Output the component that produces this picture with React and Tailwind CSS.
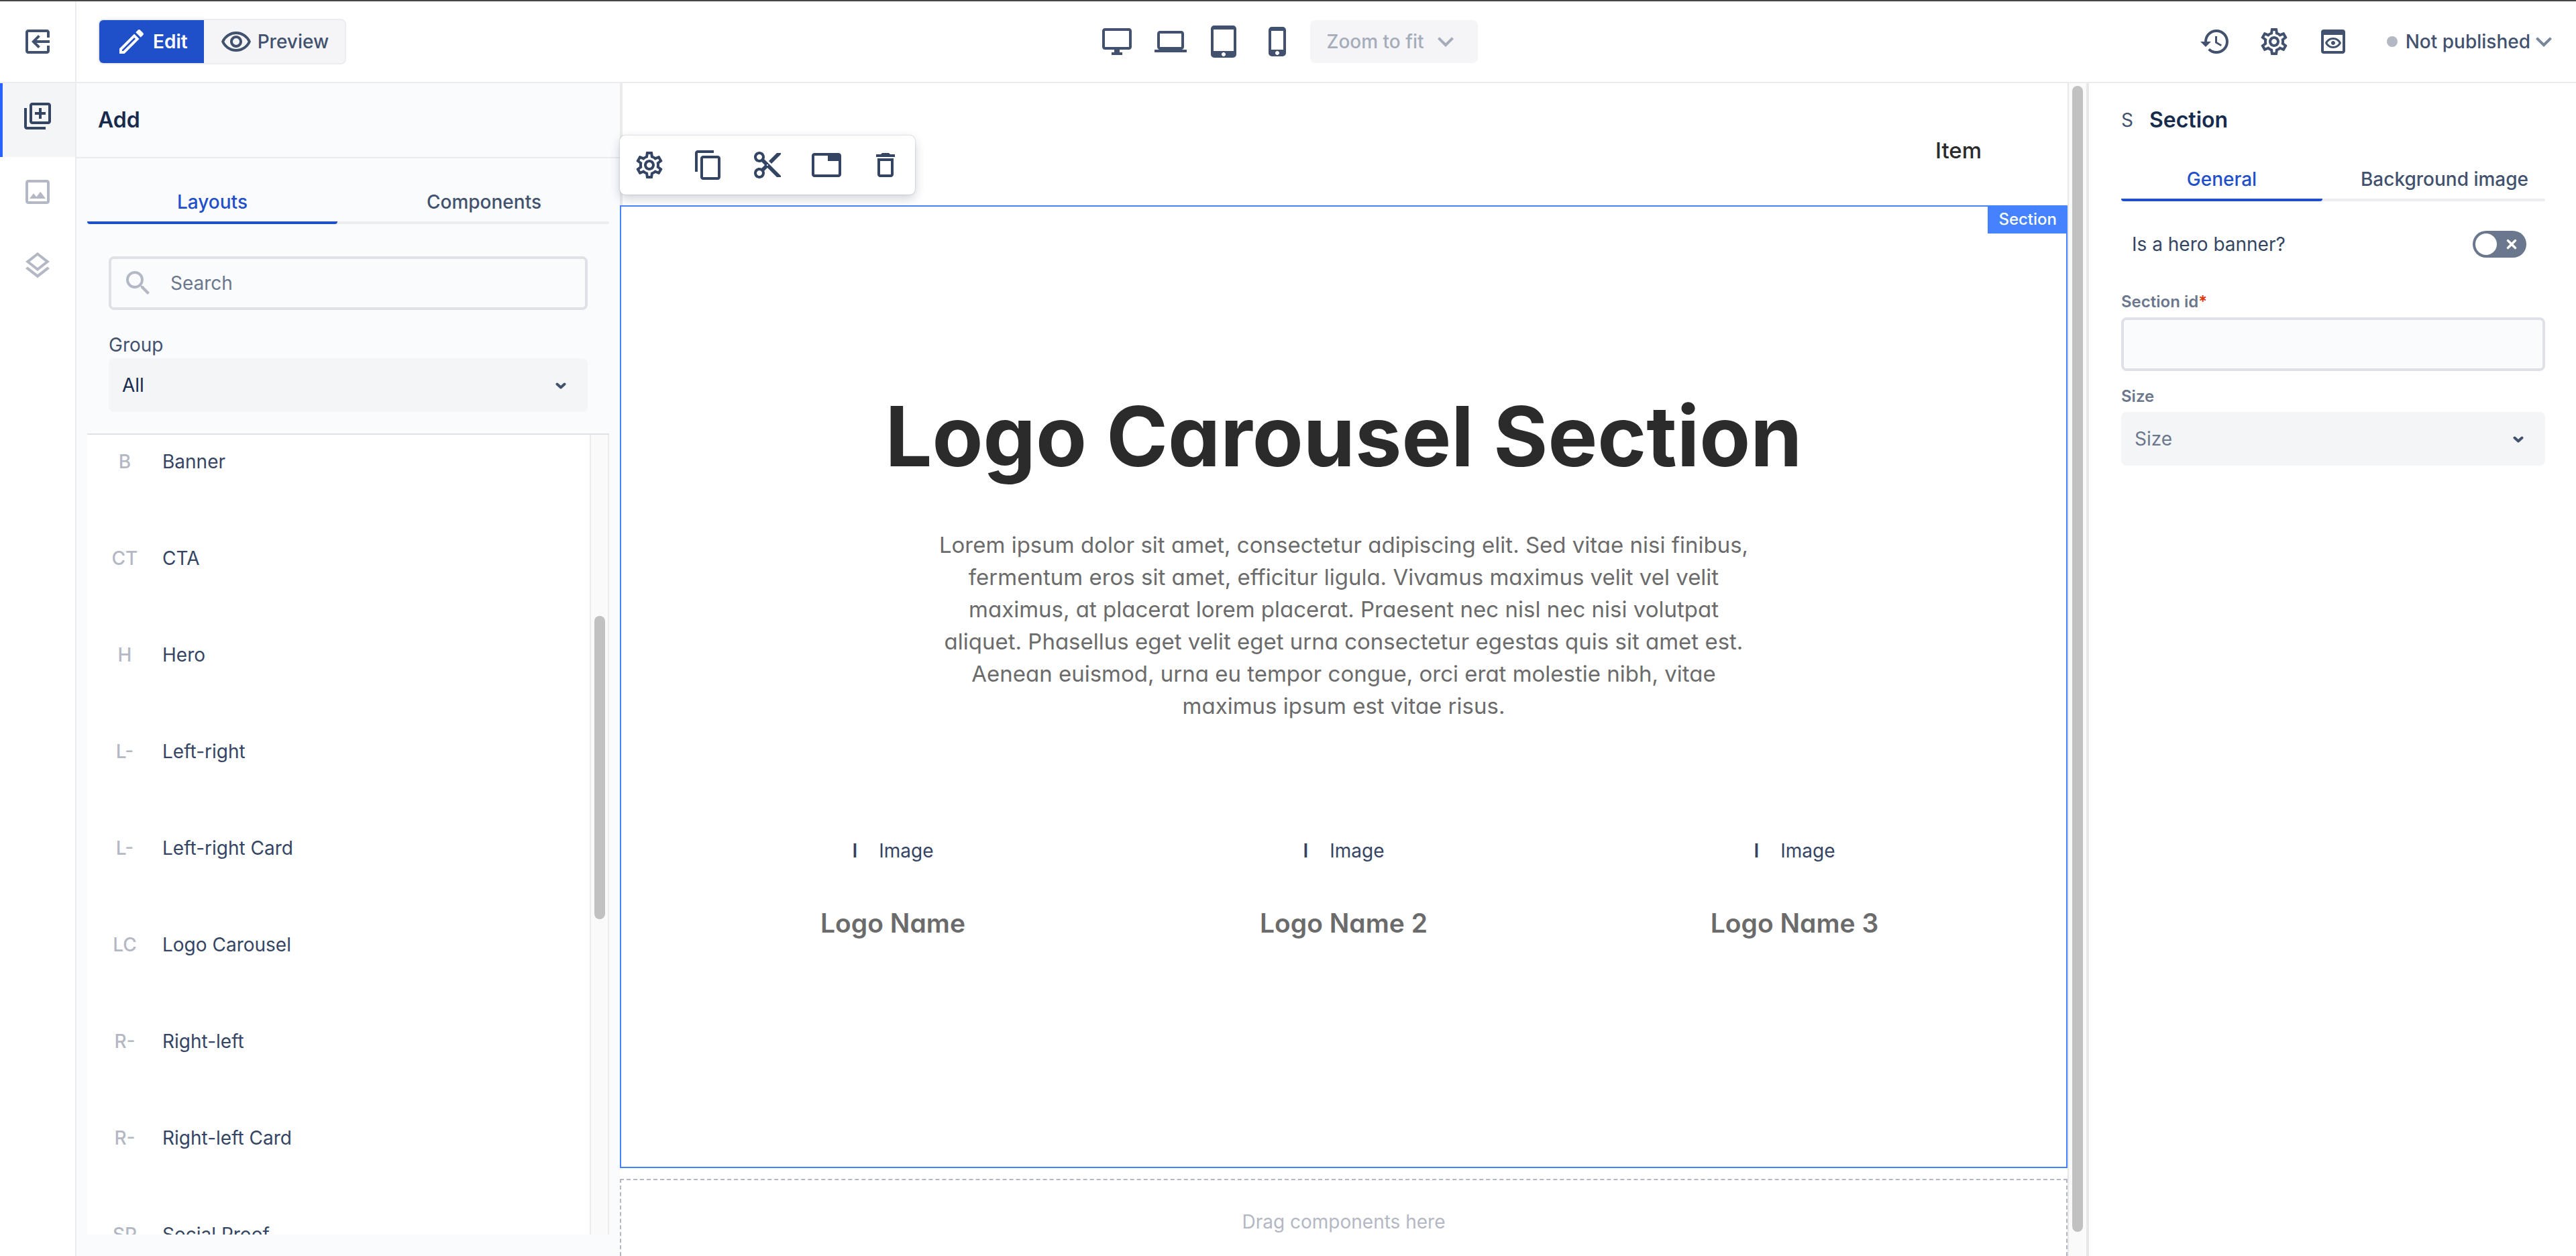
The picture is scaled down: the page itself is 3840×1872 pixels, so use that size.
import React, { useState } from "react";
import {
  MdOutlineEdit,
  MdOutlineRemoveRedEye,
  MdOutlineDesktopWindows,
  MdLaptop,
  MdTabletMac,
  MdPhoneIphone,
  MdExpandMore,
  MdHistory,
  MdOutlineSettings,
  MdOutlinePreview,
  MdOutlineLibraryAdd,
  MdOutlineImage,
  MdOutlineLayers,
  MdSearch,
  MdContentCopy,
  MdContentCut,
  MdOutlineTab,
  MdDeleteOutline,
} from "react-icons/md";

const layouts = [
  ["B", "Banner"],
  ["CT", "CTA"],
  ["H", "Hero"],
  ["L-", "Left-right"],
  ["L-", "Left-right Card"],
  ["LC", "Logo Carousel"],
  ["R-", "Right-left"],
  ["R-", "Right-left Card"],
  ["SP", "Social Proof"],
];

const paragraph = [
  "Lorem ipsum dolor sit amet, consectetur adipiscing elit. Sed vitae nisi finibus,",
  "fermentum eros sit amet, efficitur ligula. Vivamus maximus velit vel velit",
  "maximus, at placerat lorem placerat. Praesent nec nisl nec nisi volutpat",
  "aliquet. Phasellus eget velit eget urna consectetur egestas quis sit amet est.",
  "Aenean euismod, urna eu tempor congue, orci erat molestie nibh, vitae",
  "maximus ipsum est vitae risus.",
];

const logos = ["Logo Name", "Logo Name 2", "Logo Name 3"];

function ExitIcon() {
  return (
    <svg viewBox="0 0 24 24" className="size-12" fill="currentColor" aria-hidden="true">
      <path d="M19 3H5c-1.1 0-2 .9-2 2v14c0 1.1.9 2 2 2h14c1.1 0 2-.9 2-2v-4h-2v4H5V5h14v4h2V5c0-1.1-.9-2-2-2z" />
      <path d="M12.5 17l1.41-1.41L11.33 13H21v-2h-9.67l2.58-2.59L12.5 7l-5 5z" />
    </svg>
  );
}

function SelectChevron() {
  return (
    <svg viewBox="0 0 16 10" className="pointer-events-none absolute right-8 top-9 h-[10px] w-4 text-[#42526e]" fill="none" stroke="currentColor" strokeWidth="4" strokeLinecap="round" strokeLinejoin="round" aria-hidden="true">
      <path d="M2.5 2.5L8 7.5l5.500-5" />
    </svg>
  );
}

function Tabs({ items, label }) {
  const [active, setActive] = useState(0);
  return (
    <div role="tablist" aria-label={label} className="relative flex gap-8">
      <span className="absolute inset-x-0 bottom-0 h-1 rounded-sm bg-[#ebecf0]" />
      {items.map((item, i) => (
        <button
          key={item}
          role="tab"
          aria-selected={i === active}
          onClick={() => setActive(i)}
          className={
            i === active
              ? "relative h-[70px] flex-1 basis-0 whitespace-nowrap rounded-sm border-b-4 border-[#1f4fc9] pt-2 text-center font-medium text-[#1f4fc9]"
              : "relative h-[70px] flex-1 basis-0 whitespace-nowrap border-b-4 border-transparent pt-2 text-center font-medium text-[#42526e]"
          }
        >
          {item}
        </button>
      ))}
    </div>
  );
}

function Header() {
  return (
    <header className="grid h-[124px] shrink-0 grid-cols-[1fr_auto_1fr] border-b-2 border-t-2 border-b-[#ebecf0] border-t-[#454545] bg-white text-[#42526e]">
      <div className="flex items-center gap-8">
        <div className="flex w-[114px] shrink-0 items-center justify-center self-stretch border-r-2 border-[#ebecf0]">
          <button aria-label="Exit editor"><ExitIcon /></button>
        </div>
        <div className="flex h-[68px] w-fit overflow-hidden rounded-lg border-2 border-[#ebecf0] bg-[#f5f5f8] font-medium">
          <button className="flex items-center gap-2 bg-[#1f4fc9] px-6 font-semibold text-white">
            <MdOutlineEdit className="size-12" />Edit
          </button>
          <button className="flex items-center gap-2 px-6">
            <MdOutlineRemoveRedEye className="size-12" />Preview
          </button>
        </div>
      </div>
      <div className="flex items-center gap-8 pl-1">
        <button aria-label="Desktop"><MdOutlineDesktopWindows className="size-12" /></button>
        <button aria-label="Laptop"><MdLaptop className="size-12" /></button>
        <button aria-label="Tablet"><MdTabletMac className="size-12" /></button>
        <button aria-label="Phone"><MdPhoneIphone className="size-12" /></button>
        <button className="-ml-2 flex h-16 items-center gap-2 rounded-lg bg-[#f5f5f8] px-6 font-medium text-[#a5adba]">
          Zoom to fit<MdExpandMore className="size-12" />
        </button>
      </div>
      <div className="flex items-center justify-end gap-10 pr-6">
        <button aria-label="History"><MdHistory className="size-12" /></button>
        <button aria-label="Settings"><MdOutlineSettings className="size-12" /></button>
        <button aria-label="Preview page"><MdOutlinePreview className="size-12" /></button>
        <button className="ml-4 flex items-center font-medium">
          <span className="mr-3 size-4 rounded-full bg-[#b3b8c4]" />
          Not published
          <MdExpandMore className="-ml-1 size-12 text-[#7a869a]" />
        </button>
      </div>
    </header>
  );
}

function Rail() {
  return (
    <nav className="w-[114px] shrink-0 border-r-2 border-[#ebecf0] bg-white text-[#b3b8c4]">
      <button aria-label="Add" className="flex h-[110px] w-full items-center justify-center border-l-4 border-[#2962ff] bg-[#f4f5f7] pb-3 pr-1 text-[#344563]">
        <MdOutlineLibraryAdd className="size-12" />
      </button>
      <button aria-label="Images" className="flex h-28 w-full items-center justify-center pb-2">
        <MdOutlineImage className="size-12" />
      </button>
      <button aria-label="Layers" className="flex h-28 w-full items-center justify-center pb-3">
        <MdOutlineLayers className="size-12" />
      </button>
    </nav>
  );
}

function AddPanel() {
  return (
    <aside className="flex w-[810px] shrink-0 flex-col bg-[#fafbfd] pb-8">
      <h2 className="flex h-28 shrink-0 items-center border-b-2 border-[#ebecf0] px-8 text-[32px] font-semibold text-[#172b4d]">Add</h2>
      <div className="flex min-h-0 flex-1 flex-col px-4 pt-7">
        <Tabs items={["Layouts", "Components"]} label="Add" />
        <div className="px-8 pb-8 pt-12">
          <label className="flex h-20 items-center gap-6 rounded-lg border-4 border-[#dfe1e6] px-4">
            <MdSearch className="size-12 text-[#b3b8c4]" />
            <input type="search" placeholder="Search" aria-label="Search" className="min-w-0 flex-1 bg-transparent outline-none placeholder:text-[#6b778c]" />
          </label>
          <label htmlFor="group" className="mt-8 block h-10 leading-10 text-[#42526e]">Group</label>
          <div className="relative">
            <select id="group" className="h-20 w-full appearance-none rounded-lg bg-[#f4f5f7] px-5 text-[#172b4d]">
              <option>All</option>
            </select>
            <SelectChevron />
          </div>
        </div>
        <div className="flex min-h-0 flex-1 border-t-2 border-[#dfe1e6]">
          <ul className="flex-1 overflow-hidden bg-white">
            {layouts.map(([initials, name]) => (
              <li key={name} className="flex h-36 items-center text-[#344563] first:-mt-8">
                <span className="w-28 text-center font-medium text-[#b3b8c4]">{initials}</span>
                {name}
              </li>
            ))}
          </ul>
          <div className="w-[29px] border-x-2 border-[#ebebeb] bg-[#fafafa] px-[5px] pt-[270px]">
            <div className="h-[452px] w-4 rounded-full bg-[#c1c1c1]" />
          </div>
        </div>
      </div>
    </aside>
  );
}

function Toolbar() {
  const tools = [
    ["Settings", MdOutlineSettings],
    ["Copy", MdContentCopy],
    ["Cut", MdContentCut],
    ["Layout", MdOutlineTab],
    ["Delete", MdDeleteOutline],
  ];
  return (
    <div className="absolute -left-1 bottom-4 flex h-[88px] rounded-lg bg-white text-[#344563] shadow-[0_0_2px_rgba(9,30,66,0.31),0_6px_16px_rgba(9,30,66,0.2)]">
      {tools.map(([name, Icon]) => (
        <button key={name} aria-label={name} className="flex w-[88px] items-center justify-center">
          <Icon className="size-12" />
        </button>
      ))}
    </div>
  );
}

function Canvas() {
  return (
    <div className="flex min-w-0 flex-1">
      <main className="flex min-w-0 flex-1 flex-col bg-white">
        <div className="relative flex h-[182px] shrink-0 justify-end border-l-4 border-[#ebebeb] pr-32 pt-20 text-[33px] font-medium leading-10 text-[#2b2b2b] [font-feature-settings:'cv11']">
          Item
          <Toolbar />
        </div>
        <section className="relative h-[1435px] shrink-0 border-2 border-[#4582ff] pt-[282px] text-center">
          <span className="absolute -right-0.5 -top-0.5 bg-[#4582ff] px-4 text-2xl font-medium leading-[42px] text-white">Section</span>
          <h1 className="text-[124px] font-bold leading-[120px] text-[#2b2b2b] [font-feature-settings:'cv11']">Logo Carousel Section</h1>
          <p className="mt-[78px] text-[33px] leading-[48px] text-[#6b6b6b] [font-feature-settings:'cv11']">
            {paragraph.map((line) => (
              <span key={line} className="block">{line}</span>
            ))}
          </p>
          <div className="mx-auto mt-[172px] grid w-[2016px] grid-cols-3">
            {logos.map((name) => (
              <div key={name}>
                <div className="flex h-10 items-center justify-center gap-8 text-[#344563]">
                  <span className="font-semibold">I</span>
                  <span>Image</span>
                </div>
                <h3 className="mt-16 text-[39px] font-semibold leading-[48px] text-[#6b6b6b] [font-feature-settings:'cv11']">{name}</h3>
              </div>
            ))}
          </div>
        </section>
        <div className="mt-4 min-h-0 flex-1 overflow-hidden border-2 border-b-0 border-dashed border-[#b3b8c4] pt-11 text-center leading-9 text-[#b3b8c4]">
          Drag components here
        </div>
      </main>
      <div className="w-8 shrink-0 border-l-2 border-r-4 border-[#e8e8e8] bg-[#fafafa] px-[5px] pb-9 pt-1">
        <div className="h-full w-4 rounded-full bg-[#c1c1c1]" />
      </div>
    </div>
  );
}

function Properties() {
  return (
    <aside className="w-[726px] shrink-0 bg-white px-12 pr-[46px]">
      <h2 className="flex h-[106px] items-center gap-6 pt-1 text-[32px] font-semibold text-[#172b4d]">
        <span className="text-[28px] font-normal text-[#42526e]">S</span>Section
      </h2>
      <Tabs items={["General", "Background image"]} label="Section" />
      <label className="mt-11 flex h-10 items-center justify-between pl-4 pr-7 text-[#344563]">
        Is a hero banner?
        <span className="relative block h-10 w-20">
          <input type="checkbox" role="switch" className="h-10 w-20 appearance-none rounded-full bg-[#6b778c]" />
          <span className="absolute left-1 top-1 size-8 rounded-full bg-white" />
          <svg viewBox="0 0 16 16" className="absolute right-[14px] top-3 size-4" stroke="white" strokeWidth="3.500" strokeLinecap="round" aria-hidden="true">
            <path d="M2.500 2.500l11 11M13.500 2.500l-11 11" />
          </svg>
        </span>
      </label>
      <label htmlFor="section-id" className="mt-[50px] block h-[39px] text-2xl leading-8 font-semibold text-[#6b778c]">
        Section id<span className="text-[#de350b]">*</span>
      </label>
      <input id="section-id" type="text" className="h-20 w-full rounded-lg border-4 border-[#dfe1e6] bg-[#fafbfc] px-4" />
      <label htmlFor="size" className="mt-[22px] block h-[39px] text-2xl leading-8 font-semibold text-[#6b778c]">Size</label>
      <div className="relative">
        <select id="size" className="h-20 w-full appearance-none rounded-lg bg-[#f4f5f7] px-5 text-[#6b778c]">
          <option>Size</option>
        </select>
        <SelectChevron />
      </div>
    </aside>
  );
}

export default function App() {
  return (
    <div className="flex h-screen flex-col overflow-hidden bg-white font-['Inter',sans-serif] text-[28px] leading-9">
      <Header />
      <div className="flex min-h-0 flex-1">
        <Rail />
        <AddPanel />
        <Canvas />
        <Properties />
      </div>
    </div>
  );
}
